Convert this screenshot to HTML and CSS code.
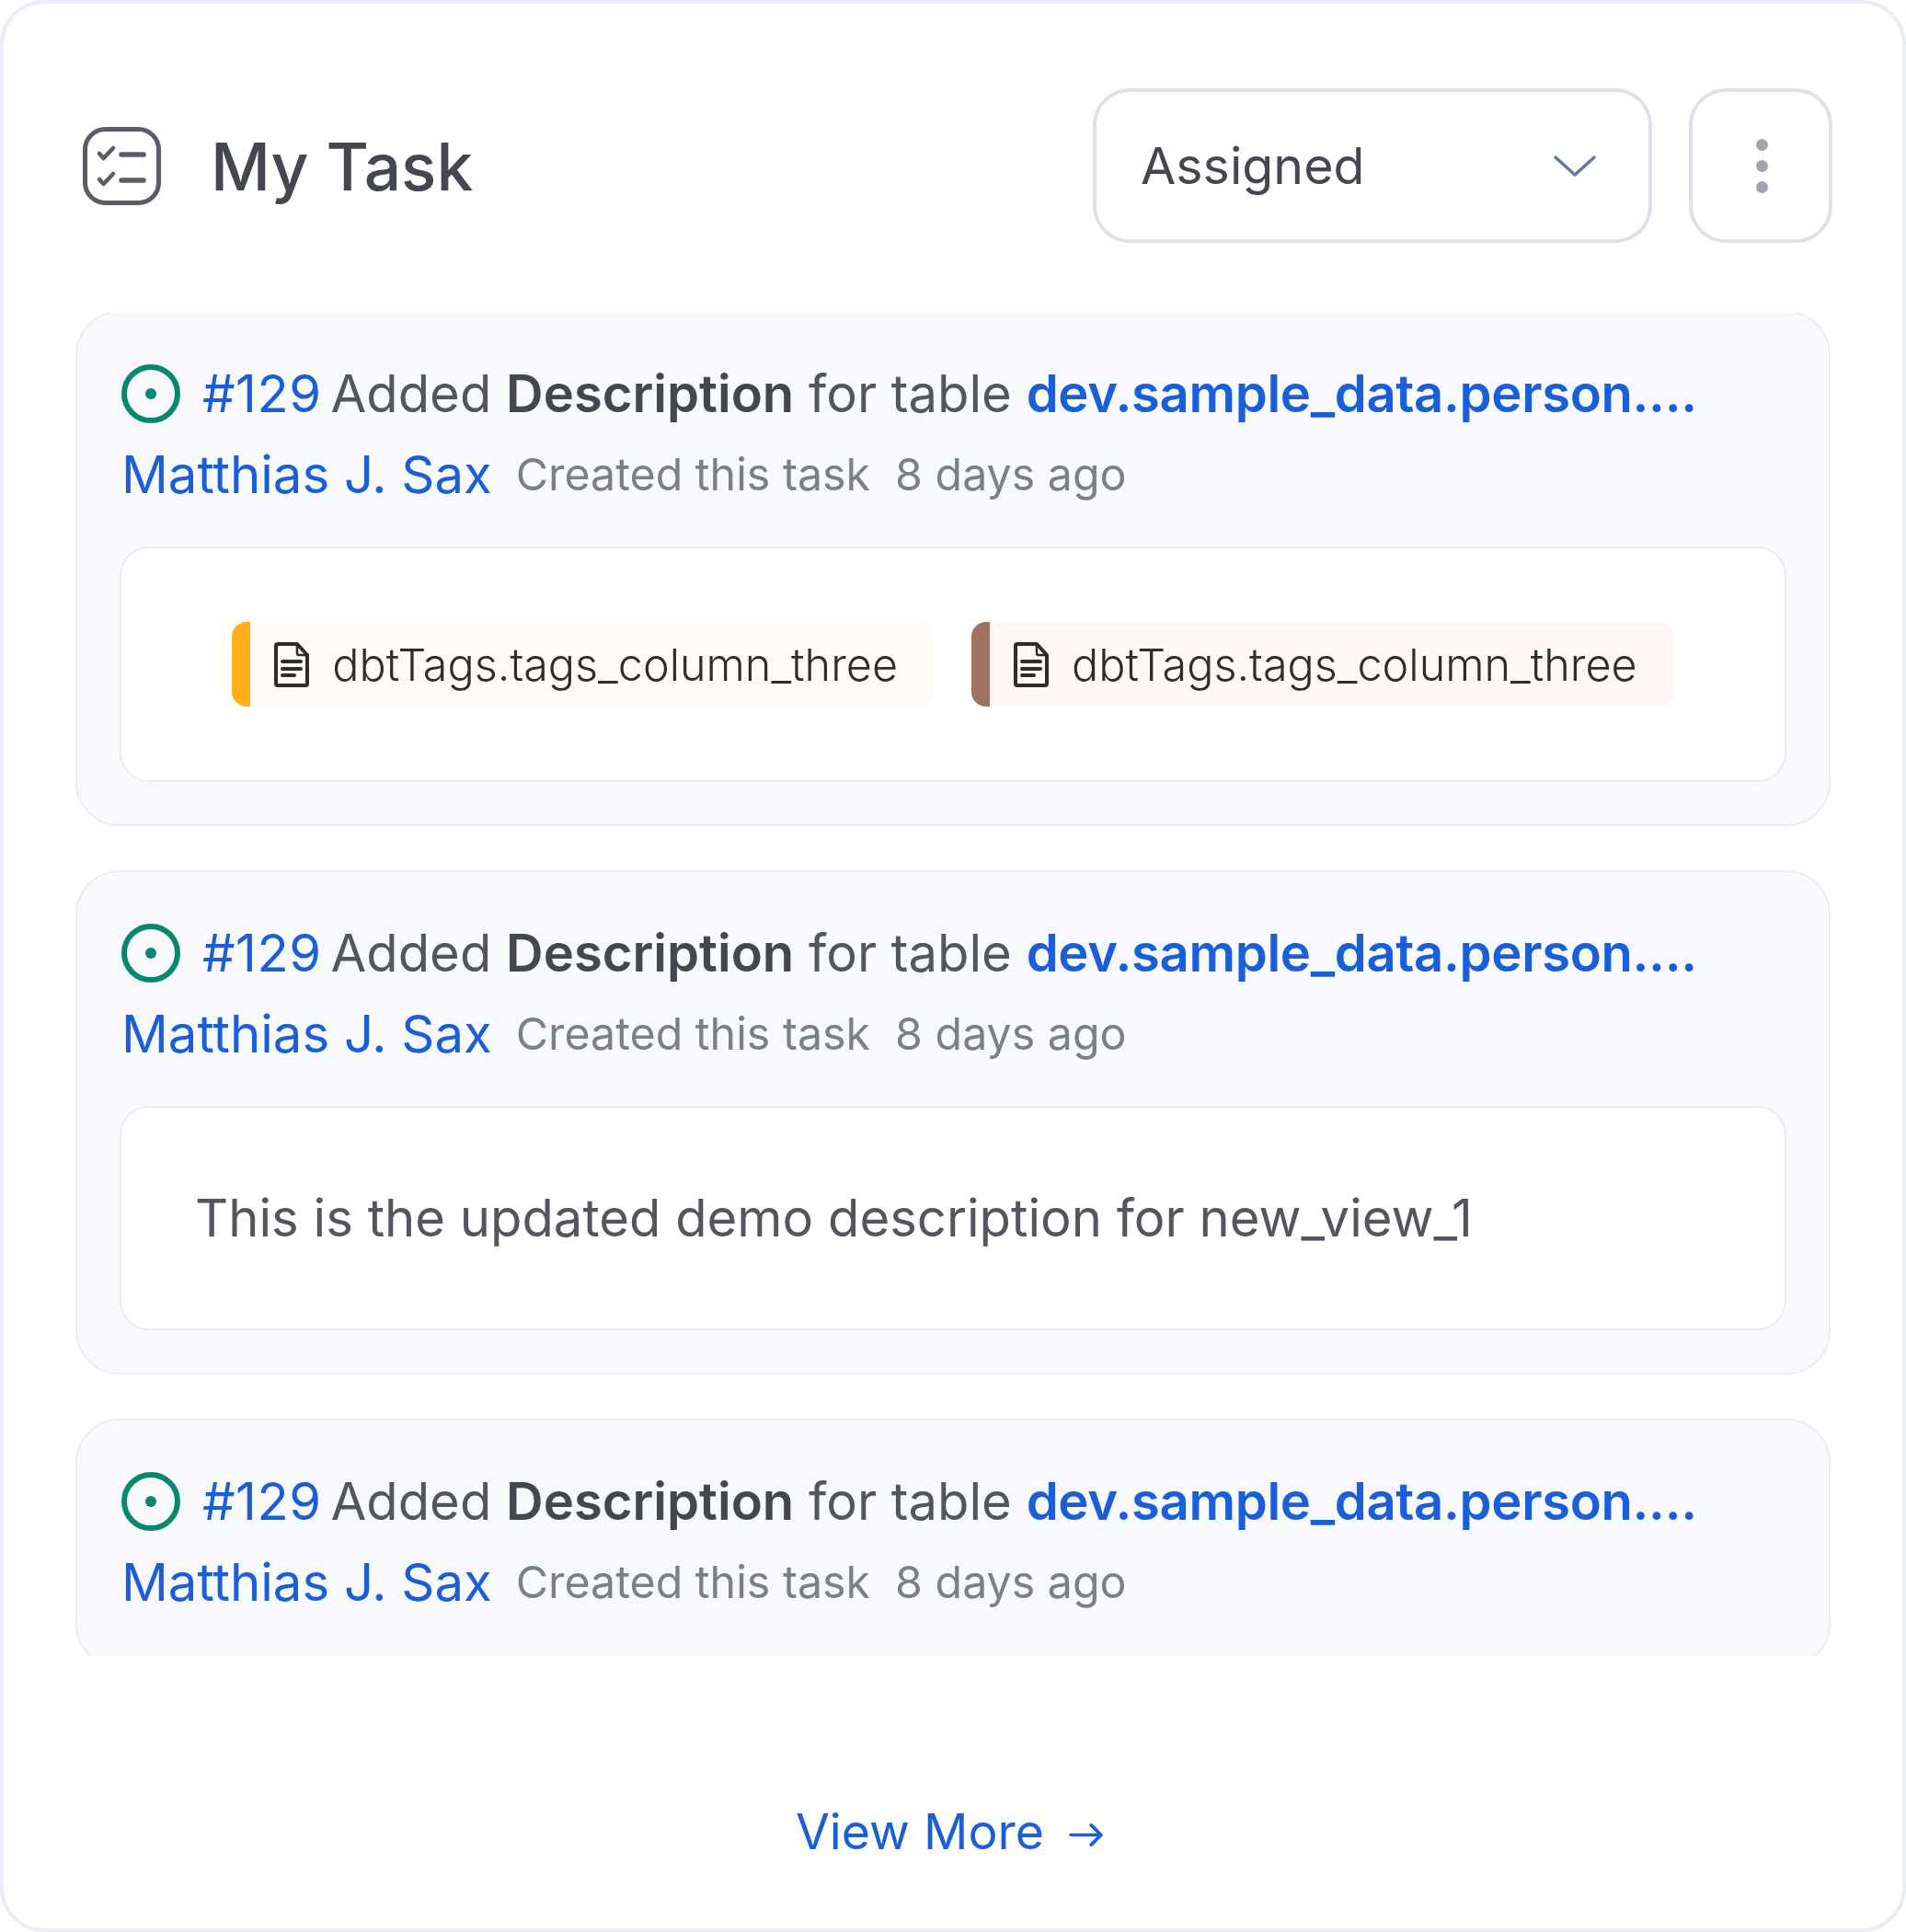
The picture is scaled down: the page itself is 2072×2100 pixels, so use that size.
FILE: index.html
```html
<!DOCTYPE html>
<html lang="en">
<head>
    <meta charset="UTF-8">
    <title>My Task</title>
    <link rel="stylesheet" href="styles.css">
</head>
<body>
    <div class="panel">
        <div class="panel-head">
            <svg class="task-icon" viewBox="0 0 85 85" fill="none" stroke="#5a5d69" stroke-linecap="round" stroke-linejoin="round">
                <rect x="2.500" y="2.500" width="80" height="80" rx="22" stroke-width="5"/>
                <path d="M18 29l4.500 5L33 23M18 57l4.500 5L33 51" stroke-width="4.500"/>
                <path d="M42 30h24M42 58h24" stroke-width="5.500"/>
            </svg>
            <h1>My Task</h1>
            <div class="select-box">
                <span>Assigned</span>
                <svg class="chevron" viewBox="0 0 46 23" fill="none" stroke="#64789a" stroke-width="3.500" stroke-linecap="round" stroke-linejoin="round"><path d="M2 2l21 19L44 2"/></svg>
            </div>
            <div class="more-btn">
                <i></i><i></i><i></i>
            </div>
        </div>

        <div class="task-list">
            <div class="task-card">
                <div class="task-title">
                    <svg class="status-icon" viewBox="0 0 64 64"><circle cx="32" cy="32" r="29" fill="none" stroke="#07876f" stroke-width="6"/><circle cx="32" cy="32" r="6" fill="#07876f"/></svg>
                    <a class="task-id">#129</a>
                    <span>Added <b>Description</b> for table <a class="table-link">dev.sample_data.person....</a></span>
                </div>
                <div class="task-meta">
                    <a class="author">Matthias J. Sax</a>
                    <span>Created this task</span>
                    <span>8 days ago</span>
                </div>
                <div class="task-body tags-body">
                    <div class="tag tag-yellow">
                        <svg class="doc-icon" viewBox="0 0 38 49" fill="none" stroke="#2d2d2d" stroke-width="4" stroke-linecap="round" stroke-linejoin="round"><path d="M4 2h21l11 12v31a2 2 0 0 1-2 2H4a2 2 0 0 1-2-2V4a2 2 0 0 1 2-2z"/><path d="M25 3v9a2 2 0 0 0 2 2h8" stroke-width="2.500"/><path d="M9 21h20M9 29h20M9 36h13"/></svg>
                        <span>dbtTags.tags_column_three</span>
                    </div>
                    <div class="tag tag-brown">
                        <svg class="doc-icon" viewBox="0 0 38 49" fill="none" stroke="#2d2d2d" stroke-width="4" stroke-linecap="round" stroke-linejoin="round"><path d="M4 2h21l11 12v31a2 2 0 0 1-2 2H4a2 2 0 0 1-2-2V4a2 2 0 0 1 2-2z"/><path d="M25 3v9a2 2 0 0 0 2 2h8" stroke-width="2.500"/><path d="M9 21h20M9 29h20M9 36h13"/></svg>
                        <span>dbtTags.tags_column_three</span>
                    </div>
                </div>
            </div>

            <div class="task-card">
                <div class="task-title">
                    <svg class="status-icon" viewBox="0 0 64 64"><circle cx="32" cy="32" r="29" fill="none" stroke="#07876f" stroke-width="6"/><circle cx="32" cy="32" r="6" fill="#07876f"/></svg>
                    <a class="task-id">#129</a>
                    <span>Added <b>Description</b> for table <a class="table-link">dev.sample_data.person....</a></span>
                </div>
                <div class="task-meta">
                    <a class="author">Matthias J. Sax</a>
                    <span>Created this task</span>
                    <span>8 days ago</span>
                </div>
                <div class="task-body text-body">This is the updated demo description for new_view_1</div>
            </div>

            <div class="task-card task-card-cut">
                <div class="task-title">
                    <svg class="status-icon" viewBox="0 0 64 64"><circle cx="32" cy="32" r="29" fill="none" stroke="#07876f" stroke-width="6"/><circle cx="32" cy="32" r="6" fill="#07876f"/></svg>
                    <a class="task-id">#129</a>
                    <span>Added <b>Description</b> for table <a class="table-link">dev.sample_data.person....</a></span>
                </div>
                <div class="task-meta">
                    <a class="author">Matthias J. Sax</a>
                    <span>Created this task</span>
                    <span>8 days ago</span>
                </div>
            </div>
        </div>

        <div class="panel-foot">
            <a class="view-more">View More</a>
            <svg class="arrow" viewBox="0 0 38 28" fill="none" stroke="#1a5fd8" stroke-width="3.800" stroke-linecap="round" stroke-linejoin="round"><path d="M2 14h33M25 3l11 11-11 11"/></svg>
        </div>
    </div>
</body>
</html>
```

FILE: styles.css
```css
* {
    box-sizing: border-box;
}
body {
    margin: 0;
    font-family: 'Inter', sans-serif;
    background-color: white;
    color: #444650;
}
.panel {
    height: 2100px;
    display: flex;
    flex-direction: column;
    background-color: white;
    border: 4px solid #e9edf5;
    border-radius: 48px;
    padding: 92px 78px 0 78px;
}
.panel-head {
    display: flex;
    align-items: center;
    height: 168px;
    margin-right: -2px;
}
.task-icon {
    width: 85px;
    height: 85px;
    margin-left: 8px;
}
h1 {
    flex: 1;
    margin: 0 0 0 54px;
    padding-top: 2px;
    font-size: 71.200px;
    font-weight: 500;
    color: #444650;
}
.select-box {
    display: flex;
    align-items: center;
    justify-content: space-between;
    width: 608px;
    height: 168px;
    padding: 0 57px 2px 48px;
    border: 4px solid #dde1ea;
    border-radius: 40px;
    font-size: 55.500px;
}
.chevron {
    width: 46px;
    height: 23px;
    margin-top: 2px;
}
.more-btn {
    display: flex;
    flex-direction: column;
    align-items: center;
    justify-content: center;
    gap: 10px;
    width: 156px;
    height: 168px;
    margin-left: 40px;
    padding-left: 3px;
    border: 4px solid #dde1ea;
    border-radius: 40px;
}
.more-btn i {
    width: 13px;
    height: 13px;
    border-radius: 50%;
    background-color: #a2a5ad;
}
.task-list {
    display: flex;
    flex-direction: column;
    gap: 48px;
    height: 1460px;
    margin-top: 76px;
    overflow: hidden;
}
.task-card {
    flex: none;
    padding: 56px 46px 46px 46px;
    background-color: #f8f9fd;
    border: 2px solid #e9ecf5;
    border-radius: 48px;
}
.task-card:first-child {
    margin-top: -2px;
}
.task-card-cut {
    height: 271px;
}
.task-title {
    display: flex;
    align-items: center;
    height: 64px;
    margin-left: 2px;
    font-size: 56.200px;
    white-space: nowrap;
    color: #53555f;
}
.task-title b {
    font-weight: 600;
    color: #444650;
}
.status-icon {
    width: 64px;
    height: 64px;
    margin-right: 24px;
}
.task-id {
    margin-right: 10px;
    color: #1a5fd8;
    letter-spacing: 0.5px;
}
.table-link {
    color: #1a5fd8;
    font-weight: 600;
    letter-spacing: -0.350px;
}
.task-meta {
    display: flex;
    align-items: center;
    gap: 27px;
    height: 68px;
    margin: 21px 0 45px 2px;
    font-size: 48.300px;
    color: #7c7f88;
}
.author {
    margin-right: -1px;
    font-size: 56.300px;
    color: #1a5fd8;
}
.task-body {
    background-color: white;
    border: 2px solid #e9ecf5;
    border-radius: 32px;
}
.tags-body {
    display: flex;
    justify-content: center;
    align-items: center;
    gap: 40px;
    height: 256px;
}
.text-body {
    height: 244px;
    padding: 0 80px;
    font-size: 56.200px;
    line-height: 240px;
    color: #53555f;
}
.tag {
    display: flex;
    align-items: center;
    height: 92px;
    padding: 0 40px 0 26px;
    border-left: 20px solid;
    border-radius: 16px;
    font-size: 48.500px;
    font-weight: 300;
    color: #2d2d2d;
}
.tag-yellow {
    background-color: #fefbf7;
    border-left-color: #ffb01a;
}
.tag-brown {
    background-color: #fef7f5;
    border-left-color: #a07360;
}
.doc-icon {
    width: 38px;
    height: 49px;
    margin-right: 25px;
}
.panel-foot {
    flex: 1;
    display: flex;
    align-items: center;
    justify-content: center;
    gap: 27px;
    padding: 84px 8px 0 0;
    font-size: 53.600px;
}
.view-more {
    color: #1a5fd8;
}
.arrow {
    width: 37px;
    height: 27px;
    margin-top: 8px;
}
```
